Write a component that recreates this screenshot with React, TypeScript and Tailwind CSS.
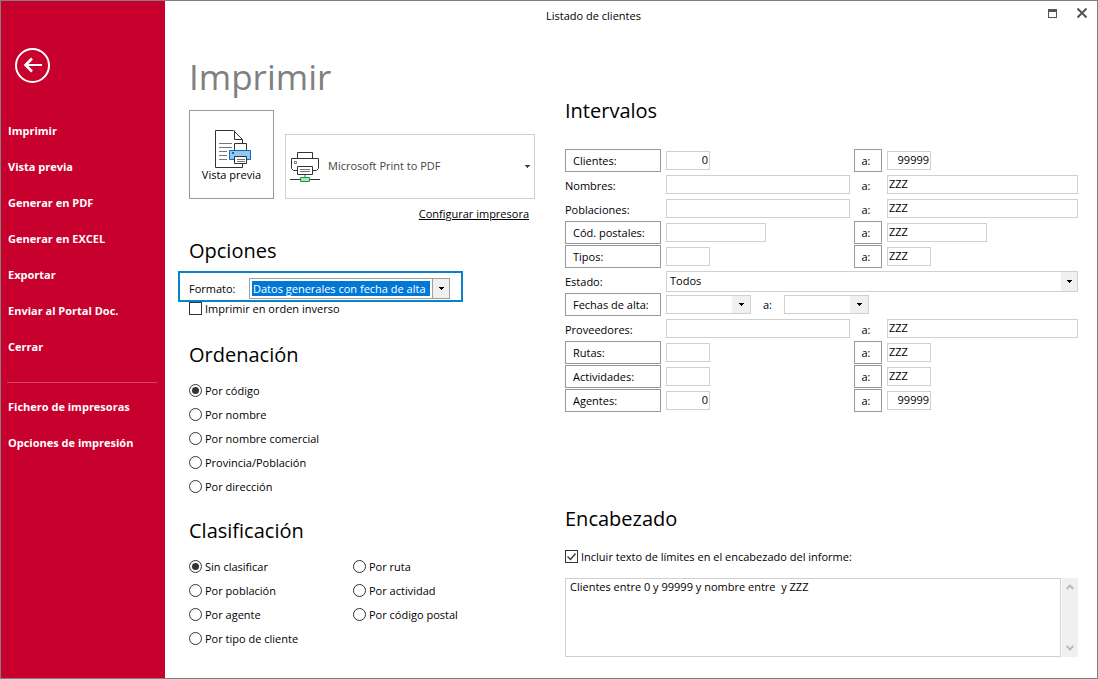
import { useState, type ReactNode } from "react";

const mainLinks = [
  "Imprimir",
  "Vista previa",
  "Generar en PDF",
  "Generar en EXCEL",
  "Exportar",
  "Enviar al Portal Doc.",
  "Cerrar",
];
const extraLinks = ["Fichero de impresoras", "Opciones de impresión"];

const sortOptions = ["Por código", "Por nombre", "Por nombre comercial", "Provincia/Población", "Por dirección"];
const groupOptions = [
  "Sin clasificar",
  "Por población",
  "Por agente",
  "Por tipo de cliente",
  "Por ruta",
  "Por actividad",
  "Por código postal",
];

type Size = "sm" | "md" | "full";

interface RangeRow {
  label: string;
  lookup?: boolean;
  from?: string;
  to: string;
  size: Size;
  numeric?: boolean;
}

const rangesTop: RangeRow[] = [
  { label: "Clientes:", lookup: true, from: "0", to: "99999", size: "sm", numeric: true },
  { label: "Nombres:", to: "ZZZ", size: "full" },
  { label: "Poblaciones:", to: "ZZZ", size: "full" },
  { label: "Cód. postales:", lookup: true, to: "ZZZ", size: "md" },
  { label: "Tipos:", lookup: true, to: "ZZZ", size: "sm" },
];

const rangesBottom: RangeRow[] = [
  { label: "Proveedores:", to: "ZZZ", size: "full" },
  { label: "Rutas:", lookup: true, to: "ZZZ", size: "sm" },
  { label: "Actividades:", lookup: true, to: "ZZZ", size: "sm" },
  { label: "Agentes:", lookup: true, from: "0", to: "99999", size: "sm", numeric: true },
];

const widths: Record<Size, string> = { sm: "w-11", md: "w-25", full: "w-full" };

const ROW = "grid h-6 grid-cols-[97px_184px_29px_1fr] items-center gap-x-1";

function Caret() {
  return (
    <svg width="5" height="3" viewBox="0 0 5 3" shapeRendering="crispEdges" aria-hidden="true">
      <path d="M0 0h5v1H4v1H3v1H2V2H1V1H0z" fill="currentColor" />
    </svg>
  );
}

function PreviewIcon() {
  return (
    <svg width="36" height="38" viewBox="0 0 36 38" fill="none" aria-hidden="true">
      <path d="M27.5 34v3.5H.5V.5h18l9 9v4" stroke="#333" />
      <path d="M19.5.5v9h8" stroke="#333" />
      <path d="M4 13.5h13M4 17.5h13M4 21.5h8M4 25.5h8M4 29.5h8" stroke="#777" />
      <path d="M19.5 20v-6.5h12V20" stroke="#333" fill="#fff" />
      <path d="M14.5 20.5h21v9h-21z" stroke="#0f6cbd" fill="#90c8f0" />
      <path d="M17 22h2v2h-2z" fill="#0f6cbd" />
      <path d="M19.5 26.5h12v7h-12z" stroke="#333" fill="#fff" />
      <path d="M22 29.5h8M22 31.5h8" stroke="#777" />
    </svg>
  );
}

function NetworkPrinterIcon() {
  return (
    <svg width="30" height="30" viewBox="0 0 30 30" fill="none" aria-hidden="true">
      <path d="M7.5 6V.5h15V6" stroke="#333" />
      <path d="M7 18.5H3.5l-2-2v-10h27v10l-2 2H23" stroke="#333" />
      <path d="M4.5 9.5h2v2h-2z" stroke="#777" />
      <path d="M7.5 14.5h15v8h-15z" stroke="#333" fill="#fff" />
      <path d="M10 17.5h10M10 19.5h10" stroke="#777" />
      <path d="M15 23v2" stroke="#aaa" strokeWidth="2" />
      <path d="M0 27.5h10M20 27.5h10" stroke="#333" />
      <path d="M10.5 25.5h9v4h-9z" stroke="#10a03c" fill="#b8e0b8" />
    </svg>
  );
}

function Heading({ children }: { children: ReactNode }) {
  return <h2 className="text-[20px] leading-7 text-black">{children}</h2>;
}

function RadioOption({ group, label, checked, onSelect }: {
  group: string;
  label: string;
  checked: boolean;
  onSelect: () => void;
}) {
  return (
    <label className="flex h-6 items-center gap-[3px]">
      <input
        type="radio"
        name={group}
        checked={checked}
        onChange={onSelect}
        className="mb-px grid size-[13px] shrink-0 appearance-none place-content-center rounded-full border border-[#333] before:size-[7px] before:rounded-full checked:before:bg-[#333]"
      />
      {label}
    </label>
  );
}

function CheckOption({ label, defaultChecked }: { label: string; defaultChecked?: boolean }) {
  return (
    <label className="flex h-3.5 items-center gap-[3px]">
      <span className="relative mb-px size-[13px] shrink-0">
        <input
          type="checkbox"
          defaultChecked={defaultChecked}
          className="peer block size-[13px] appearance-none border border-[#333] bg-white"
        />
        <svg
          viewBox="0 0 13 13"
          fill="none"
          className="pointer-events-none absolute inset-0 hidden peer-checked:block"
          aria-hidden="true"
        >
          <path d="M2.5 6.5l3 3 5-6" stroke="#333" strokeWidth="1.3" />
        </svg>
      </span>
      {label}
    </label>
  );
}

function Field({ label, value = "", size, numeric }: { label: string; value?: string; size: Size; numeric?: boolean }) {
  return (
    <input
      type="text"
      aria-label={label}
      defaultValue={value}
      className={`h-[19px] border border-[#d0d0d0] px-px pb-0.5 ${widths[size]} ${numeric ? "text-right" : ""}`}
    />
  );
}

function LookupButton({ children }: { children: ReactNode }) {
  return (
    <button type="button" className="h-[23px] w-24 border border-[#999] pt-0.5 pl-[7px] text-left">
      {children}
    </button>
  );
}

function Range({ row }: { row: RangeRow }) {
  return (
    <div className={ROW}>
      {row.lookup ? <LookupButton>{row.label}</LookupButton> : <span className="pt-1">{row.label}</span>}
      <Field label={`${row.label} desde`} value={row.from} size={row.size} numeric={row.numeric} />
      {row.lookup ? (
        <button type="button" className="h-[23px] w-7 border border-[#999] pt-0.5 pr-1">a:</button>
      ) : (
        <span className="w-7 pt-1 pr-1 text-center">a:</span>
      )}
      <Field label={`${row.label} hasta`} value={row.to} size={row.size} numeric={row.numeric} />
    </div>
  );
}

function DateField({ label }: { label: string }) {
  return (
    <div className="flex h-[19px] w-[85px] border border-[#d0d0d0]">
      <input type="text" aria-label={label} className="min-w-0 flex-1 px-1" />
      <button type="button" aria-label={`Calendario ${label}`} className="grid w-[18px] place-items-center bg-[#f0f0f0]">
        <Caret />
      </button>
    </div>
  );
}

function NavItem({ children }: { children: ReactNode }) {
  return (
    <li>
      <a href="#" className="flex h-9 items-center pl-[7px]">{children}</a>
    </li>
  );
}

export default function App() {
  const [sort, setSort] = useState("Por código");
  const [group, setGroup] = useState("Sin clasificar");

  return (
    <div className="flex min-h-screen border border-[#808080] bg-white font-['Open_Sans','Noto_Sans',sans-serif] text-[11px] leading-4 text-black">
      <nav className="w-[164px] shrink-0 bg-[#c8002d] pt-[47px] font-bold text-white">
        <button type="button" aria-label="Volver" className="ml-3.5 block">
          <svg width="35" height="35" viewBox="0 0 35 35" fill="none" stroke="#fff">
            <circle cx="17.5" cy="17.5" r="16.5" strokeWidth="2" />
            <path d="M27 17H10.5" strokeWidth="2" />
            <path d="M17 10.5L10.5 17l6.5 6.5" strokeWidth="2.6" />
          </svg>
        </button>
        <ul className="mt-[30px]">
          {mainLinks.map((l) => <NavItem key={l}>{l}</NavItem>)}
        </ul>
        <hr className="mt-[17px] mr-2 mb-1.5 ml-1.5 border-[#d8435f]" />
        <ul>
          {extraLinks.map((l) => <NavItem key={l}>{l}</NavItem>)}
        </ul>
      </nav>

      <div className="min-w-0 flex-1">
        <header className="flex h-[30px] items-center">
          <h1 className="flex-1 text-center">Listado de clientes</h1>
          <div className="flex w-[75px] items-center gap-5 pb-1.5 pl-[26px]">
            <button type="button" aria-label="Maximizar">
              <svg width="9" height="9" viewBox="0 0 9 9" className="block" shapeRendering="crispEdges">
                <path d="M.5.5h8v8h-8z" fill="none" stroke="#555" />
                <path d="M0 0h9v3H0z" fill="#555" />
              </svg>
            </button>
            <button type="button" aria-label="Cerrar ventana">
              <svg width="10" height="10" viewBox="0 0 10 10" className="block">
                <path d="M.5.5l9 9M9.5.5l-9 9" stroke="#555" strokeWidth="2" />
              </svg>
            </button>
          </div>
        </header>

        <main className="flex gap-[30px] pt-[22px] pr-[19px] pb-5 pl-6">
          <div className="w-[346px] shrink-0">
            <h2 className="text-[35px] leading-12 text-[#808080]">Imprimir</h2>
            <div className="mt-[9px] flex items-end gap-[11px]">
              <button
                type="button"
                className="flex h-[89px] w-[85px] flex-col items-center border border-[#999] pt-[19px]"
              >
                <span className="pl-[3px]"><PreviewIcon /></span>
                <span className="-mt-px">Vista previa</span>
              </button>
              <div className="relative flex h-[65px] flex-1 items-center border border-[#d0d0d0] pl-1">
                <NetworkPrinterIcon />
                <select aria-label="Impresora" className="h-full flex-1 appearance-none pb-0.5 pl-2 text-[#444]">
                  <option>Microsoft Print to PDF</option>
                </select>
                <span className="pointer-events-none absolute right-1 text-[#444]"><Caret /></span>
              </div>
            </div>
            <div className="mt-[7px] pr-1.5 text-right">
              <a href="#" className="underline">Configurar impresora</a>
            </div>

            <section className="mt-[15px]">
              <Heading>Opciones</Heading>
              <div className="mt-1.5 -ml-[11px] flex h-[31px] w-[285px] items-center border-2 border-[#0a82c8] pt-1 pl-[9px]">
                <label htmlFor="formato" className="w-15">Formato:</label>
                <div className="relative flex h-[21px] w-[201px] items-center border border-[#a0a0a0] pl-0.5">
                  <select
                    id="formato"
                    className="h-[15px] w-[178px] appearance-none bg-[#0078d7] px-px leading-[15px] text-white"
                  >
                    <option>Datos generales con fecha de alta</option>
                  </select>
                  <span className="pointer-events-none absolute inset-y-0 right-0 grid w-[17px] place-items-center border-l border-[#a0a0a0] bg-[#f0f0f0]">
                    <Caret />
                  </span>
                </div>
              </div>
              <CheckOption label="Imprimir en orden inverso" />
            </section>

            <section className="mt-[25px]">
              <Heading>Ordenación</Heading>
              <div className="mt-2.5">
                {sortOptions.map((o) => (
                  <RadioOption key={o} group="orden" label={o} checked={sort === o} onSelect={() => setSort(o)} />
                ))}
              </div>
            </section>

            <section className="mt-[18px]">
              <Heading>Clasificación</Heading>
              <div className="mt-2.5 grid grid-flow-col grid-cols-[164px_1fr] grid-rows-4">
                {groupOptions.map((o) => (
                  <RadioOption key={o} group="clasificacion" label={o} checked={group === o} onSelect={() => setGroup(o)} />
                ))}
              </div>
            </section>
          </div>

          <div className="min-w-0 flex-1 pt-11">
            <section>
              <Heading>Intervalos</Heading>
              <div className="mt-[23px]">
                {rangesTop.map((r) => <Range key={r.label} row={r} />)}
                <div className={ROW}>
                  <label htmlFor="estado" className="pt-1">Estado:</label>
                  <div className="relative col-span-3 mt-0.5 flex h-[21px] border border-[#d0d0d0]">
                    <select id="estado" className="flex-1 appearance-none pl-[3px]">
                      <option>Todos</option>
                    </select>
                    <span className="pointer-events-none absolute inset-y-0 right-0 grid w-4 place-items-center bg-[#f0f0f0]">
                      <Caret />
                    </span>
                  </div>
                </div>
                <div className={ROW}>
                  <LookupButton>Fechas de alta:</LookupButton>
                  <div className="col-span-3 flex items-center">
                    <DateField label="Fecha desde" />
                    <span className="w-[33px] pt-0.5 text-center">a:</span>
                    <DateField label="Fecha hasta" />
                  </div>
                </div>
                {rangesBottom.map((r) => <Range key={r.label} row={r} />)}
              </div>
            </section>

            <section className="mt-[93px]">
              <Heading>Encabezado</Heading>
              <div className="mt-[17px]">
                <CheckOption label="Incluir texto de límites en el encabezado del informe:" defaultChecked />
              </div>
              <div className="mt-3.5 flex h-[79px] gap-px">
                <textarea
                  aria-label="Texto del encabezado"
                  defaultValue="Clientes entre 0 y 99999 y nombre entre  y ZZZ"
                  className="min-w-0 flex-1 resize-none overflow-hidden border border-[#d0d0d0] px-1"
                />
                <div className="flex w-4 flex-col items-center justify-between bg-[#f0f0f0] py-1.5 text-[#bbb]">
                  <button type="button" aria-label="Subir">
                    <svg width="8" height="6" viewBox="0 0 8 6" className="block" fill="none">
                      <path d="M.7 5L4 1.5 7.3 5" stroke="currentColor" strokeWidth="2" />
                    </svg>
                  </button>
                  <button type="button" aria-label="Bajar">
                    <svg width="8" height="6" viewBox="0 0 8 6" className="block" fill="none">
                      <path d="M.7 1L4 4.5 7.3 1" stroke="currentColor" strokeWidth="2" />
                    </svg>
                  </button>
                </div>
              </div>
            </section>
          </div>
        </main>
      </div>
    </div>
  );
}
